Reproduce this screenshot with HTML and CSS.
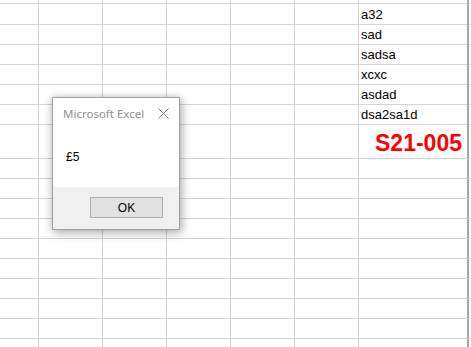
FILE: index.html
```html
<!DOCTYPE html>
<html lang="en">
<head>
    <meta name="viewport" content="width=device-width, initial-scale=1.0">
    <title>Microsoft Excel</title>
    <link rel="stylesheet" href="styles.css">
</head>
<body>
    <div class="sheet">
        <div class="row top"><span></span><span></span><span></span><span></span><span></span><span></span><span></span><span class="edge"></span></div>
        <div class="row"><span></span><span></span><span></span><span></span><span></span><span></span><span>a32</span><span class="edge"></span></div>
        <div class="row"><span></span><span></span><span></span><span></span><span></span><span></span><span>sad</span><span class="edge"></span></div>
        <div class="row"><span></span><span></span><span></span><span></span><span></span><span></span><span>sadsa</span><span class="edge"></span></div>
        <div class="row"><span></span><span></span><span></span><span></span><span></span><span></span><span>xcxc</span><span class="edge"></span></div>
        <div class="row"><span></span><span></span><span></span><span></span><span></span><span></span><span>asdad</span><span class="edge"></span></div>
        <div class="row"><span></span><span></span><span></span><span></span><span></span><span></span><span>dsa2sa1d</span><span class="edge"></span></div>
        <div class="row tall"><span></span><span></span><span></span><span></span><span></span><span></span><span class="code">S21-005</span><span class="edge"></span></div>
        <div class="row"><span></span><span></span><span></span><span></span><span></span><span></span><span></span><span class="edge"></span></div>
        <div class="row"><span></span><span></span><span></span><span></span><span></span><span></span><span></span><span class="edge"></span></div>
        <div class="row"><span></span><span></span><span></span><span></span><span></span><span></span><span></span><span class="edge"></span></div>
        <div class="row"><span></span><span></span><span></span><span></span><span></span><span></span><span></span><span class="edge"></span></div>
        <div class="row"><span></span><span></span><span></span><span></span><span></span><span></span><span></span><span class="edge"></span></div>
        <div class="row"><span></span><span></span><span></span><span></span><span></span><span></span><span></span><span class="edge"></span></div>
        <div class="row"><span></span><span></span><span></span><span></span><span></span><span></span><span></span><span class="edge"></span></div>
        <div class="row"><span></span><span></span><span></span><span></span><span></span><span></span><span></span><span class="edge"></span></div>
        <div class="row"><span></span><span></span><span></span><span></span><span></span><span></span><span></span><span class="edge"></span></div>
        <div class="row"><span></span><span></span><span></span><span></span><span></span><span></span><span></span><span class="edge"></span></div>
    </div>

    <div class="msgbox">
        <div class="title">
            <span>Microsoft Excel</span>
            <svg class="close" width="11" height="11" viewBox="0 0 11 11">
                <path d="M0.5 0.5 L10.5 10.5 M10.5 0.5 L0.5 10.5" stroke="#7a7a7a" stroke-width="1" fill="none"/>
            </svg>
        </div>
        <div class="message">£5</div>
        <div class="footer">
            <button>OK</button>
        </div>
    </div>
</body>
</html>
```

FILE: styles.css
```css
*{
    margin: 0;
    padding: 0;
    box-sizing: border-box;
}
body{
    background: #fff;
    width: 471px;
    height: 347px;
    overflow: hidden;
    position: relative;
    font-family: 'Liberation Sans', Arial, sans-serif;
}
.row{
    display: grid;
    grid-template-columns: 39px repeat(5, 64px) 110px 4px;
    height: 20px;
}
.row.top{
    height: 4px;
}
.row.tall{
    height: 35px;
}
.row span{
    border-right: 1px solid #d4d4d4;
    border-bottom: 1px solid #d4d4d4;
    font-size: 13px;
    line-height: 19px;
    padding: 1px 0 0 2px;
    color: #000;
    white-space: nowrap;
}
.row span:nth-child(7){
    border-right: 2px solid #a6a6a6;
}
.row span.edge{
    border-right: 0;
}
.row span.code{
    color: #ff0000;
    font-weight: 700;
    font-size: 23px;
    line-height: 30px;
    padding: 4px 5px 0 0;
    text-align: right;
}
.msgbox{
    position: absolute;
    left: 52px;
    top: 97px;
    width: 128px;
    height: 133px;
    background: #fff;
    border: 1px solid #a0a0a0;
    box-shadow: 0 0 8px rgba(0,0,0,0.18), 2px 4px 10px rgba(0,0,0,0.22);
    display: flex;
    flex-direction: column;
}
.title{
    height: 30px;
    display: flex;
    align-items: center;
    justify-content: space-between;
    padding: 0 10px 0 10px;
    font-family: 'Noto Sans', sans-serif;
    font-size: 11.5px;
    color: #8f8f8f;
}
.close{
    display: block;
    margin-top: 1px;
}
.message{
    flex: 1;
    padding: 22px 0 0 13px;
    font-size: 12px;
    line-height: 14px;
    color: #000;
}
.footer{
    height: 42px;
    background: #f0f0f0;
    padding: 10px 0 0 37px;
}
.footer button{
    width: 73px;
    height: 21px;
    background: #e1e1e1;
    border: 1px solid #adadad;
    font-family: 'Liberation Sans', Arial, sans-serif;
    font-size: 12px;
    color: #000;
}
```
